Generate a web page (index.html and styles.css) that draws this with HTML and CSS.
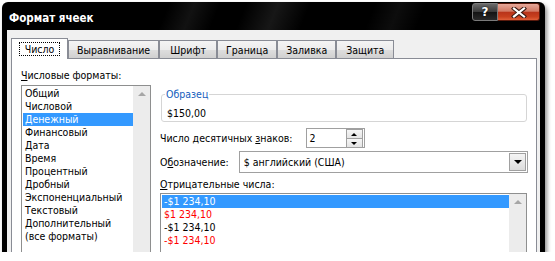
FILE: index.html
```html
<!DOCTYPE html>
<html lang="ru">
<head>
  <meta charset="UTF-8">
  <title>Формат ячеек</title>
  <link rel="stylesheet" href="styles.css">
</head>
<body>
  <div class="dialogWindow">
    <div class="titleBar">
      <span class="titleText">Формат ячеек</span>
      <div class="captionButtons">
        <div class="btHelp">?</div>
        <div class="btClose">
          <svg width="16" height="11" viewBox="0 0 16 11">
            <path d="M3 1.5 L13 9.5 M13 1.5 L3 9.5" stroke="#3b1a12" stroke-width="4.2" stroke-linecap="square" fill="none"/>
            <path d="M3 1.5 L13 9.5 M13 1.5 L3 9.5" stroke="#ffffff" stroke-width="2.2" stroke-linecap="square" fill="none"/>
          </svg>
        </div>
      </div>
    </div>

    <div class="clientArea">
      <div class="tabs">
        <div class="tab tabActive"><span class="focusBox">Число</span></div>
        <div class="tab">Выравнивание</div>
        <div class="tab">Шрифт</div>
        <div class="tab">Граница</div>
        <div class="tab">Заливка</div>
        <div class="tab">Защита</div>
      </div>

      <div class="tabPanel">
        <div class="leftColumn">
          <div class="fieldLabel"><u>Ч</u>исловые форматы:</div>
          <div class="listBox">
            <div class="listItems">
              <div class="listItem">Общий</div>
              <div class="listItem">Числовой</div>
              <div class="listItem selected">Денежный</div>
              <div class="listItem">Финансовый</div>
              <div class="listItem">Дата</div>
              <div class="listItem">Время</div>
              <div class="listItem">Процентный</div>
              <div class="listItem">Дробный</div>
              <div class="listItem">Экспоненциальный</div>
              <div class="listItem">Текстовый</div>
              <div class="listItem">Дополнительный</div>
              <div class="listItem">(все форматы)</div>
            </div>
            <div class="scrollBar"><span class="arrowUp"></span></div>
          </div>
        </div>

        <div class="rightColumn">
          <fieldset class="sampleBox">
            <legend>Образец</legend>
            <div class="sampleValue">$150,00</div>
          </fieldset>

          <div class="formRow rowDecimals">
            <span>Число десятичных <u>з</u>наков:</span>
            <div class="spinBox">
              <span class="spinValue">2</span>
              <div class="spinButtons">
                <div class="spinButton"><span class="arrowSmallUp"></span></div>
                <div class="spinButton"><span class="arrowSmallDown"></span></div>
              </div>
            </div>
          </div>

          <div class="formRow rowSymbol">
            <span>О<u>б</u>означение:</span>
            <div class="comboBox">
              <span class="comboValue">$ английский (США)</span>
              <div class="comboButton"><span class="arrowDown"></span></div>
            </div>
          </div>

          <div class="fieldLabel negLabel"><u>О</u>трицательные числа:</div>
          <div class="listBox">
            <div class="listItems">
              <div class="listItem selected">-$1 234,10</div>
              <div class="listItem red">$1 234,10</div>
              <div class="listItem">-$1 234,10</div>
              <div class="listItem red">-$1 234,10</div>
            </div>
            <div class="scrollBar"><span class="arrowUp"></span></div>
          </div>
        </div>
      </div>
    </div>
  </div>
</body>
</html>
```

FILE: styles.css
```css
body {
  margin: 0;
  padding: 0;
  background-color: #ffffff;
  color: #000000;
  font-family: "DejaVu Sans Condensed", "DejaVu Sans", sans-serif;
  font-size: 10.5px;
}

.dialogWindow {
  margin: 2px 0 0 2px;
  width: 543px;
  height: 250px;
  overflow: hidden;
  display: flex;
  flex-direction: column;
  border-radius: 6px 6px 0 0;
  background-color: #000000;
  background-image: linear-gradient(112deg, transparent 26%, rgba(255,255,255,0.07) 30%, transparent 34%, transparent 38%, rgba(255,255,255,0.09) 43%, transparent 48%, transparent 58%, rgba(255,255,255,0.05) 62%, transparent 66%);
  box-shadow: 2px 3px 4px rgba(0,0,0,0.45);
}

.titleBar {
  height: 28px;
  flex: none;
  display: flex;
  justify-content: space-between;
  align-items: flex-start;
  padding-left: 7px;
}
.titleText {
  padding-top: 9px;
  line-height: 14px;
  font-weight: bold;
  font-size: 11.5px;
  color: #ffffff;
}
.captionButtons {
  display: flex;
  margin: 1px 5px 0 0;
}
.btHelp {
  width: 24px;
  height: 16px;
  border: 1px solid #7a7a7a;
  border-radius: 3px 0 0 3px;
  background-image: linear-gradient(#6a6a6a, #3a3a3a 48%, #141414 52%, #2a2a2a);
  color: #ffffff;
  font-family: "DejaVu Sans", sans-serif;
  font-weight: bold;
  font-size: 12px;
  line-height: 16px;
  text-align: center;
  text-shadow: 0 0 2px #000000;
}
.btClose {
  width: 41px;
  height: 16px;
  border: 1px solid #5a1a0c;
  border-left: 0;
  border-radius: 0 3px 3px 0;
  background-image: linear-gradient(#e7a99a, #d27a64 45%, #b9341a 52%, #c8401e 80%, #e0603a);
  display: flex;
  align-items: center;
  justify-content: center;
}

.clientArea {
  flex: 1;
  margin: 0 5px;
  padding: 8px 3px 0 4px;
  background-color: #f0f0f0;
  display: flex;
  flex-direction: column;
}

.tabs {
  display: flex;
  align-items: flex-end;
  height: 20px;
  flex: none;
  position: relative;
  z-index: 1;
}
.tab {
  height: 18px;
  line-height: 18px;
  min-width: 58px;
  padding: 0 8px;
  border: 1px solid #898c95;
  border-bottom: 0;
  text-align: center;
  background-image: linear-gradient(#f4f4f4, #ececec 50%, #dedede 52%, #d0d0d0);
  box-sizing: border-box;
}
.tabActive {
  height: 21px;
  min-width: 57px;
  margin-bottom: -1px;
  padding: 0 4px;
  background-image: none;
  background-color: #ffffff;
  display: flex;
  align-items: center;
  justify-content: center;
}
.focusBox {
  border: 1px dotted #000000;
  line-height: 12px;
  padding: 0 5px;
}

.tabPanel {
  flex: 1;
  display: flex;
  gap: 9px;
  padding: 10px 9px 0 9px;
  border: 1px solid #898c95;
  border-bottom: 0;
  background-color: #ffffff;
  min-height: 0;
}

.leftColumn {
  width: 130px;
  display: flex;
  flex-direction: column;
}
.rightColumn {
  flex: 1;
  display: flex;
  flex-direction: column;
}

.fieldLabel {
  line-height: 13px;
}

.listBox {
  flex: 1;
  margin-top: 3px;
  display: flex;
  border: 1px solid #8e8f8f;
  border-bottom: 0;
  padding: 1px 0 0 1px;
  background-color: #ffffff;
}
.listItems {
  flex: 1;
}
.listItem {
  height: 13px;
  line-height: 13px;
  padding-left: 2px;
  white-space: nowrap;
}
.listItem.selected {
  background-color: #3399ff;
  color: #ffffff;
}
.listItem.red {
  color: #ff0000;
}
.scrollBar {
  width: 17px;
  margin-top: -1px;
  background-color: #ececec;
  display: flex;
  justify-content: center;
}
.arrowUp {
  margin-top: 6px;
  width: 0;
  height: 0;
  border-left: 4px solid transparent;
  border-right: 4px solid transparent;
  border-bottom: 4px solid #a6a6a6;
}

.sampleBox {
  margin: 19px 0 0 1px;
  padding: 6px 4px 1px 3px;
  border: 1px solid #d5d5d5;
  border-radius: 3px;
}
.sampleBox legend {
  padding: 0 1px;
  line-height: 13px;
  color: #1560bd;
}
.sampleValue {
  padding-left: 2px;
  line-height: 13px;
}

.formRow {
  display: flex;
  align-items: center;
}
.rowDecimals {
  margin-top: 6px;
  height: 20px;
  gap: 13px;
}
.rowSymbol {
  margin-top: 3px;
  height: 22px;
  gap: 10px;
}

.spinBox {
  width: 59px;
  height: 20px;
  box-sizing: border-box;
  border: 1px solid #a0a0a0;
  background-color: #ffffff;
  display: flex;
  justify-content: space-between;
  align-items: center;
}
.spinValue {
  padding-left: 3px;
}
.spinButtons {
  display: flex;
  flex-direction: column;
  margin-right: 1px;
}
.spinButton {
  width: 15px;
  height: 8px;
  border: 1px solid #a0a0a0;
  box-sizing: content-box;
  margin-bottom: -1px;
  background-image: linear-gradient(#f6f6f6, #e4e4e4);
  display: flex;
  align-items: center;
  justify-content: center;
}
.arrowSmallUp {
  width: 0;
  height: 0;
  border-left: 3px solid transparent;
  border-right: 3px solid transparent;
  border-bottom: 3px solid #000000;
}
.arrowSmallDown {
  width: 0;
  height: 0;
  border-left: 3px solid transparent;
  border-right: 3px solid transparent;
  border-top: 3px solid #000000;
}

.comboBox {
  flex: 1;
  height: 22px;
  box-sizing: border-box;
  margin-right: -1px;
  border: 1px solid #a0a0a0;
  background-color: #ffffff;
  display: flex;
  justify-content: space-between;
  align-items: center;
}
.comboValue {
  padding-left: 4px;
}
.comboButton {
  width: 15px;
  height: 16px;
  margin-right: 1px;
  border: 1px solid #a0a0a0;
  background-image: linear-gradient(#f4f4f4, #dcdcdc);
  display: flex;
  align-items: center;
  justify-content: center;
}
.arrowDown {
  width: 0;
  height: 0;
  border-left: 4px solid transparent;
  border-right: 4px solid transparent;
  border-top: 4px solid #000000;
}

.negLabel {
  margin-top: 5px;
}
.rightColumn .listBox {
  margin-top: 2px;
}
```
